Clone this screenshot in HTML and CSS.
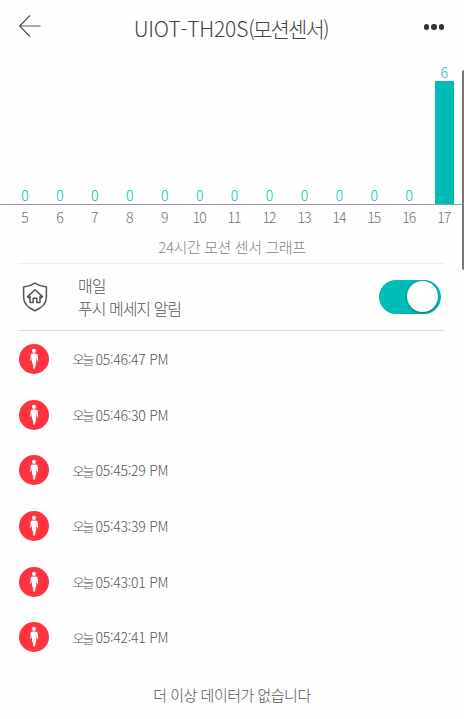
FILE: index.html
```
<!DOCTYPE html>
<html lang="ko">
<head>
<meta charset="UTF-8">
<meta name="viewport" content="width=device-width,initial-scale=1">
<title>UIOT-TH20S(모션센서)</title>
<link rel="stylesheet" href="styles.css">
</head>
<body>

<!-- shared icon -->
<svg class="defs" width="0" height="0">
  <symbol id="person" viewBox="0 0 30 30">
    <circle cx="15" cy="6.8" r="2.1"/>
    <path d="M13.4 9.5h3.2c1.3 0 2 .7 2.2 1.9l.4 4.6c.1 1-.9 1.200-1.100.3l-.6-2.600-.2 4.900-1.500 5.600c-.2.8-1.200.8-1.400 0l-.4-3-.9-2.600-.2-4.900-.6 2.600c-.2.900-1.200.7-1.100-.3l.4-4.600c.2-1.200.5-1.900 1.800-1.900z"/>
  </symbol>
</svg>

<header>
  <button class="back" aria-label="뒤로"><svg width="22" height="22" viewBox="0 0 22 22"><path d="M11 .5.7 11 11 21.5M.7 11H21.5"/></svg></button>
  <h1><span class="model">UIOT-TH20S</span><span class="kind">(모션센서)</span></h1>
  <button class="more" aria-label="더보기"><i></i><i></i><i></i></button>
</header>

<section class="chart">
  <div class="bars" id="bars"></div>
  <div class="hours" id="hours"></div>
  <p>24시간 모션 센서 그래프</p>
</section>

<section class="alarm">
  <svg class="shield" width="26" height="30" viewBox="0 0 26 30">
    <path d="M13 1.2C9.7 3.4 5.3 4.7 1.6 5.1v10.2c0 6.3 4.9 10.7 11.4 13.5 6.5-2.8 11.4-7.2 11.4-13.5V5.1C20.7 4.7 16.3 3.4 13 1.2z"/>
    <path d="M5.5 14.6 13 7.7l7.5 6.9-1.1 1-1.4-1.1v6h-3.2v-4.3h-3.6v4.3H8v-6l-1.4 1.1z"/>
  </svg>
  <div class="label"><span>매일</span><span>푸시 메세지 알림</span></div>
  <div class="switch" role="switch" aria-checked="true"></div>
</section>

<ul id="log"></ul>
<footer>더 이상 데이터가 없습니다</footer>

<div class="scrollbar"></div>

<script>
const counts={5:0,6:0,7:0,8:0,9:0,10:0,11:0,12:0,13:0,14:0,15:0,16:0,17:6};
const times=['05:46:47','05:46:30','05:45:29','05:43:39','05:43:01','05:42:41'];
const max=Math.max(...Object.values(counts));

for(const [h,n] of Object.entries(counts)){
  document.getElementById('bars').innerHTML+=`<div class="col"><span>${n}</span><div class="bar" style="height:${n/max*123}px"></div></div>`;
  document.getElementById('hours').innerHTML+=`<span>${h}</span>`;
}
times.forEach(t=>{
  document.getElementById('log').innerHTML+=`<li><svg class="person"><use href="#person"/></svg><span class="day">오늘</span><span class="time">${t} PM</span></li>`;
});
</script>
</body>
</html>
```
FILE: styles.css
```
:root{
  --teal:#00bcb6;
  --red:#ff343e;
  --text:#555;
  --muted:#858585;
  font-family:"Noto Sans CJK KR",sans-serif;
  font-weight:300;
}
*{box-sizing:border-box;margin:0;padding:0}
body{background:#fefefe;color:var(--text);height:719px;overflow:hidden;position:relative}
button{border:none;background:none}
.defs{display:block;height:0}

header{height:56px;padding:0 20px 0 19px;display:flex;align-items:center;justify-content:space-between}
.back{width:22px;height:22px;margin-bottom:4px}
.back svg{display:block;fill:none;stroke:#555;stroke-width:1.2}
h1{font-size:21px;line-height:30px;font-weight:300;color:#444;white-space:nowrap;display:flex;width:197px}
.model{letter-spacing:-.2px}
.kind{letter-spacing:-1.8px}
.more{display:flex;gap:2px;margin-bottom:2px}
.more i{width:5.5px;height:5.5px;border-radius:50%;background:#333}

/* chart */
.chart{height:207px;display:flex;flex-direction:column}
.bars{height:149px;padding-left:7.5px;display:flex;align-items:flex-end;border-bottom:1px solid #999}
.col{width:34.95px;flex:none;display:flex;flex-direction:column;align-items:center}
.col span{font-size:14px;line-height:17px;color:var(--teal)}
.bar{width:19px;background:var(--teal)}
.hours{padding:3px 0 0 7px;display:flex;font-size:14px;line-height:18px;color:#707070}
.hours span{width:34.95px;flex:none;text-align:center;letter-spacing:-1px}
.chart p{margin-top:9px;text-align:center;font-size:15px;line-height:24px;letter-spacing:-.4px;color:var(--muted)}

/* push switch */
.alarm{height:68px;margin:0 19px 0 18px;border-top:1px solid #eee;border-bottom:1px solid #ddd;display:flex;align-items:center}
.shield{margin-left:4px;fill:none;stroke:#555;stroke-width:1.5;stroke-linejoin:round}
.label{margin-left:30px;display:flex;flex-direction:column;font-size:16px;line-height:23px;letter-spacing:-1px}
.switch{margin-left:auto;margin-right:4px;width:62px;height:34px;border-radius:17px;background:var(--teal);padding:1px 3px;display:flex;justify-content:flex-end}
.switch::after{content:"";width:31px;height:31px;border-radius:50%;background:#fff;box-shadow:0 1px 3px rgba(0,0,0,.4)}

/* log */
ul{list-style:none}
li{height:55.7px;padding-left:18.5px;display:flex;align-items:center;font-size:14px}
.person{width:30px;height:30px;border-radius:50%;background:var(--red);fill:#fff;margin-right:24px}
.day{width:23px;font-size:13px;letter-spacing:-1.9px}
.time{white-space:nowrap;letter-spacing:-.25px}
footer{margin-top:18px;text-align:center;font-size:15px;line-height:24px;letter-spacing:-.5px}

.scrollbar{position:absolute;right:-2px;top:70px;width:4px;height:200px;border-radius:3px;background:#777}
```
